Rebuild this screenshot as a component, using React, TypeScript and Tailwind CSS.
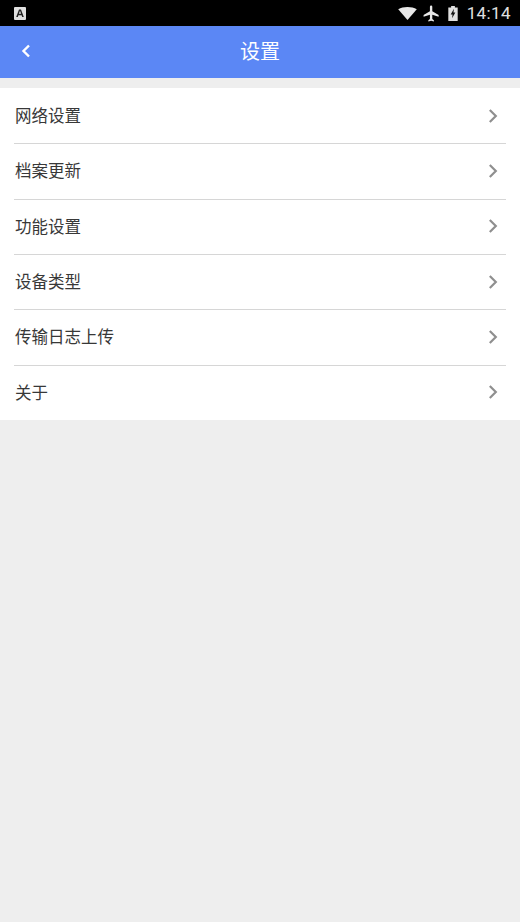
import React from 'react';

const items = ['网络设置', '档案更新', '功能设置', '设备类型', '传输日志上传', '关于'];

const Chevron: React.FC = () => (
  <svg width="10" height="14" viewBox="0 0 10 14" fill="none" stroke="#8f8f8f" strokeWidth="2.200">
    <path d="M1.800 1 7.800 7l-6 6" />
  </svg>
);

export default function App() {
  return (
    <div className="h-[922px] w-[520px] flex flex-col bg-[#eeeeee] overflow-hidden font-['Roboto','Noto_Sans_CJK_SC',sans-serif]">
      {/* Status bar */}
      <div className="h-[26px] bg-black flex items-center justify-between pl-[14px] pr-[9px] text-white">
        <div className="w-[12px] h-[13px] bg-[#e0e0e0] rounded-[1px] flex items-center justify-center">
          <svg width="10" height="11" viewBox="0 0 10 11">
            <path d="M1.200 9 4 1.500h2L8.800 9H7.200l-.6-1.800H3.400L2.800 9zM3.900 5.800h2.200L5 2.800z" fill="#222" />
          </svg>
        </div>
        <div className="flex items-center">
          <svg width="19" height="13" viewBox="0 0 20 14" className="mr-[5px]">
            <path d="M0 2.500C2.800.9 6.200 0 10 0s7.200.9 10 2.500L10 14z" fill="#e8e8e8" />
          </svg>
          <svg width="19" height="19" viewBox="0 0 24 24" className="mr-[7px]">
            <path d="M21 16v-2l-8-5V3.500a1.500 1.500 0 0 0-3 0V9l-8 5v2l8-2.500V19l-2 1.500V22l3.500-1 3.500 1v-1.500L13 19v-5.500z" fill="#e8e8e8" />
          </svg>
          <svg width="10" height="15" viewBox="0 0 10 16" className="mr-[9px]">
            <path d="M3 0h4v1.500h3V16H0V1.500h3z" fill="#e0e0e0" />
            <path d="M6 3 2.500 9h2L4 13l3.500-6h-2z" fill="#111" />
          </svg>
          <span className="text-[17px] leading-none tracking-[0.4px] text-[#e0e0e0]">14:14</span>
        </div>
      </div>

      {/* Header */}
      <div className="relative h-[52px] bg-[#5b87f5] flex items-center justify-center shrink-0">
        <svg width="10" height="14" viewBox="0 0 10 14" fill="none" stroke="#fff" strokeWidth="2.400" className="absolute left-[21px] top-[18px]">
          <path d="M8 1.500 2.500 7 8 12.500" />
        </svg>
        <span className="text-[20px] text-white">设置</span>
      </div>

      {/* List */}
      <div className="mt-[10px] bg-white">
        {items.map((label, i) => (
          <div key={label} className="h-[55.330px] px-[14px] flex flex-col">
            <div className="flex-1 flex items-center justify-between">
              <span className="ml-px mt-[3.600px] text-[16.500px] text-[#383838]">{label}</span>
              <span className="flex mr-[8px]"><Chevron /></span>
            </div>
            {i < items.length - 1 && <div className="h-px -mb-px bg-[#d6d6d6]" />}
          </div>
        ))}
      </div>
    </div>
  );
}
